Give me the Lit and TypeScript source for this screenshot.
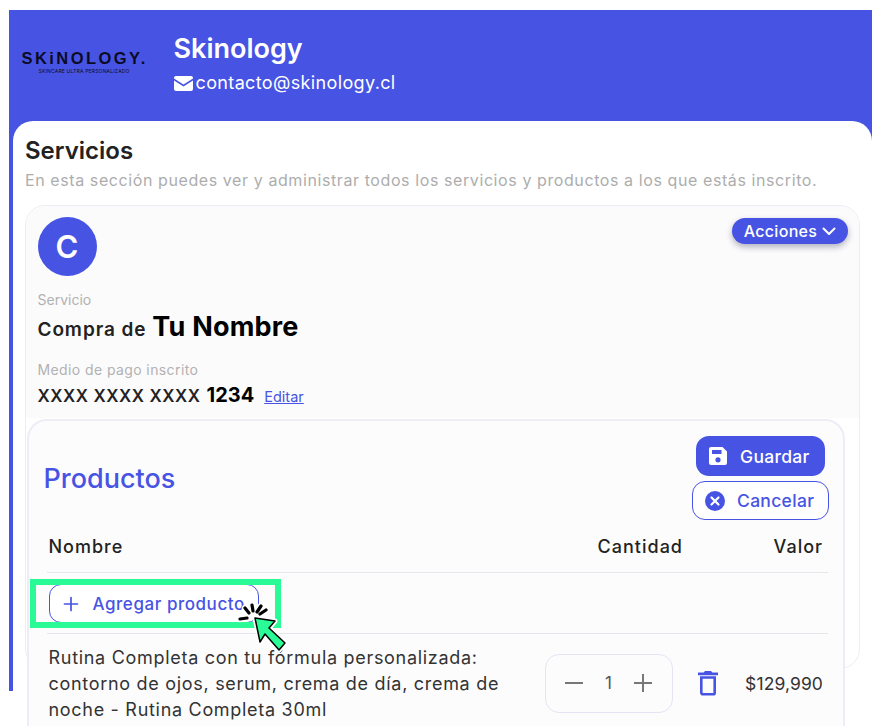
import { LitElement, html, css } from "lit";
import { customElement } from "lit/decorators.js";

@customElement("app-root")
export class AppRoot extends LitElement {
  static styles = css`
    :host { display: block; position: relative; width: 882px; height: 726px; overflow: hidden; background: #fff; font-family: Inter, "Liberation Sans", sans-serif; color: #222; }
    .page { height: 726px; padding: 10px 10px 0 8.5px; box-sizing: border-box; }
    .shell { height: 681px; background: #4754e3; display: flex; flex-direction: column; }
    .head { height: 111px; flex: none; display: flex; align-items: center; box-sizing: border-box; padding-left: 13px; }
    .logo { width: 152px; flex: none; display: flex; flex-direction: column; margin-top: -9px; color: #0b0b26; }
    .logo b { font-size: 16.5px; line-height: 20px; font-weight: 800; letter-spacing: 2.45px; font-family: "Liberation Sans", sans-serif; white-space: nowrap; }
    .logo span { font-size: 5px; line-height: 6px; margin-left: 17px; letter-spacing: .2px; white-space: nowrap; }
    .brand { color: #fff; margin-top: -3px; }
    .brand h1 { margin: 0; font-size: 27px; line-height: 32px; font-weight: 600; letter-spacing: 0; }
    .mail { display: flex; align-items: center; gap: 3px; margin-top: 6px; font-size: 18px; line-height: 24px; letter-spacing: .36px; }
    .main { flex: 1; margin-left: 4.5px; background: #fff; border-radius: 20px 20px 0 0; padding: 17px 12px 0; min-height: 0; }
    h2 { margin: 0; font-size: 24px; line-height: 26px; font-weight: 600; letter-spacing: 0; color: #222; }
    .desc { margin: 5px 0 0; font-size: 16px; line-height: 22px; color: #adadad; white-space: nowrap; letter-spacing: .59px; }
    .card { height: 464px; margin-top: 14px; box-sizing: border-box; border: 1.5px solid #eeedf6; border-radius: 20px; background: #fff; }
    .top { height: 212px; box-sizing: border-box; padding: 11px 11px 0 11.5px; background: #fbfbfc; border-radius: 20px 20px 0 0; }
    .row1 { display: flex; justify-content: space-between; align-items: flex-start; }
    .avatar { width: 59px; height: 59px; border-radius: 50%; background: #4754e3; color: #fff; display: flex; align-items: center; justify-content: center; font-size: 31px; font-weight: 600; }
    .pill { margin-top: 1px; width: 116px; height: 26px; border-radius: 13px; background: #4754e3; color: #fff; display: flex; align-items: center; justify-content: center; gap: 5px; font-size: 16px; letter-spacing: .3px; box-shadow: 0 3px 6px rgba(40,40,80,.35); font-weight: 500; }
    .lab { font-size: 14px; line-height: 18px; color: #b2b2b2; }
    .lab.a { margin-top: 15px; }
    .lab.b { margin-top: 15px; letter-spacing: .4px; }
    .svc { display: flex; align-items: baseline; gap: 6px; margin-top: 2px; font-size: 19px; line-height: 32px; font-weight: 600; color: #222; letter-spacing: .9px; white-space: nowrap; }
    .svc b { font-size: 27px; font-weight: 700; color: #000; letter-spacing: .2px; }
    .pay { display: flex; align-items: baseline; margin-top: 4px; font-size: 17px; line-height: 24px; font-weight: 600; letter-spacing: .55px; color: #222; white-space: nowrap; }
    .pay b { font-size: 20px; color: #000; font-weight: 700; margin-left: 6px; letter-spacing: 0; }
    .pay a { font-size: 14.5px; font-weight: 400; color: #4754e3; text-decoration: underline; margin-left: 10px; letter-spacing: 0; }
    .prod { margin: 1px 14px 0 .5px; height: 400px; box-sizing: border-box; background: #fcfcfd; border: 2px solid #eeedf6; border-radius: 20px; padding: 15px 15px 0 18px; }
    .ph { display: flex; justify-content: space-between; align-items: center; }
    .ph h3 { margin: 0 0 0 -3px; font-size: 27px; font-weight: 500; color: #4754e3; }
    .btns { display: flex; flex-direction: column; align-items: center; gap: 5px; margin-right: -1px; }
    .btn { box-sizing: border-box; display: flex; align-items: center; font-size: 17.5px; font-weight: 500; letter-spacing: .3px; border-radius: 13px; }
    .save { width: 129px; height: 40px; background: #4754e3; color: #fff; padding-left: 13px; gap: 13px; }
    .cancel { width: 137px; height: 39px; background: #fff; color: #4754e3; border: 1px solid #4754e3; padding-left: 12px; gap: 12px; }
    .thead { display: flex; align-items: center; height: 52px; border-bottom: 1px solid #e6e6ec; font-size: 18px; font-weight: 500; color: #222; letter-spacing: 1px; padding-left: 2px; padding-right: 5px; }
    .thead .n { flex: 1; }
    .thead .v { width: 140px; text-align: right; }
    .addrow { height: 61px; border-bottom: 1px solid #e6e6ec; padding: 11px 0 0 2px; box-sizing: border-box; }
    .add { width: 210px; height: 39px; box-sizing: border-box; border: 1px solid #4754e3; border-radius: 12px; background: #fff; color: #4754e3; display: flex; align-items: center; gap: 14px; padding-left: 13px; font-size: 17px; font-weight: 500; letter-spacing: .55px; }
    .item { display: flex; align-items: center; padding: 9px 5px 0 2px; }
    .itxt { width: 496px; flex: none; margin-top: 2px; font-size: 18px; line-height: 26px; color: #333; letter-spacing: .7px; }
    .step { width: 128px; height: 59px; box-sizing: border-box; border: 1px solid #e5e4f3; border-radius: 14px; display: flex; align-items: center; justify-content: space-between; padding: 0 18px; font-size: 17px; color: #555; }
    .trash { margin-left: 25px; display: flex; }
    .price { margin-left: auto; font-size: 17.5px; letter-spacing: .1px; color: #333; }
    .hl { position: absolute; left: 30px; top: 579px; width: 251px; height: 49px; box-sizing: border-box; border: 6px solid #2bfb97; }
    .cur { position: absolute; left: 234px; top: 598px; }
    svg { display: block; flex: none; }
  `;

  render() {
    const spokes = "M19 13 18 7M23 14l4-6M26 16l6-4M15 15l-4-5M13 20l-7 1";
    const arrow = "M21 20 41 23 35 30 51 45 45 52 31 36 26 44z";
    return html`
      <div class="page">
        <div class="shell">
          <header class="head">
            <div class="logo"><b>SKiNOLOGY.</b><span>SKINCARE ULTRA PERSONALIZADO</span></div>
            <div class="brand">
              <h1>Skinology</h1>
              <div class="mail">
                <svg width="19" height="15" viewBox="0 0 19 15"><path fill="#fff" d="M2 0h15a2 2 0 0 1 2 2v.6L9.500 8.600 0 2.600V2a2 2 0 0 1 2-2zM0 4.600l9.500 6 9.500-6V13a2 2 0 0 1-2 2H2a2 2 0 0 1-2-2z"/></svg>
                contacto@skinology.cl
              </div>
            </div>
          </header>
          <main class="main">
            <h2>Servicios</h2>
            <p class="desc">En esta sección puedes ver y administrar todos los servicios y productos a los que estás inscrito.</p>
            <section class="card">
              <div class="top">
                <div class="row1">
                  <div class="avatar">C</div>
                  <div class="pill">Acciones
                    <svg width="14" height="9" viewBox="0 0 14 9"><path d="M1.500 1.500 7 7l5.500-5.500" fill="none" stroke="#fff" stroke-width="2" stroke-linecap="round" stroke-linejoin="round"/></svg>
                  </div>
                </div>
                <div class="lab a">Servicio</div>
                <div class="svc">Compra de <b>Tu Nombre</b></div>
                <div class="lab b">Medio de pago inscrito</div>
                <div class="pay">XXXX XXXX XXXX <b>1234</b><a>Editar</a></div>
              </div>
              <div class="prod">
                <div class="ph">
                  <h3>Productos</h3>
                  <div class="btns">
                    <div class="btn save">
                      <svg width="18" height="18" viewBox="0 0 18 18"><path fill="#fff" fill-rule="evenodd" d="M2 0h11.500L18 4.500V16a2 2 0 0 1-2 2H2a2 2 0 0 1-2-2V2a2 2 0 0 1 2-2zm1 3v4h9.500V3zm6 7.200a2.600 2.600 0 1 0 0 5.200 2.600 2.600 0 0 0 0-5.200z"/></svg>
                      Guardar
                    </div>
                    <div class="btn cancel">
                      <svg width="20" height="20" viewBox="0 0 20 20"><circle cx="10" cy="10" r="10" fill="#4754e3"/><path d="m6.500 6.500 7 7m0-7-7 7" stroke="#fff" stroke-width="2.200" stroke-linecap="round"/></svg>
                      Cancelar
                    </div>
                  </div>
                </div>
                <div class="thead"><span class="n">Nombre</span><span>Cantidad</span><span class="v">Valor</span></div>
                <div class="addrow">
                  <div class="add">
                    <svg width="16" height="16" viewBox="0 0 16 16"><path d="M8 1.500v13M1.500 8h13" stroke="#4754e3" stroke-width="1.700" stroke-linecap="round"/></svg>
                    Agregar producto
                  </div>
                </div>
                <div class="item">
                  <div class="itxt">Rutina Completa con tu fórmula personalizada: contorno de ojos, serum, crema de día, crema de noche - Rutina Completa 30ml</div>
                  <div class="step">
                    <svg width="20" height="20" viewBox="0 0 20 20"><path d="M1 10h18" stroke="#777" stroke-width="2"/></svg>
                    <span>1</span>
                    <svg width="20" height="20" viewBox="0 0 20 20"><path d="M10 1v18M1 10h18" stroke="#777" stroke-width="2"/></svg>
                  </div>
                  <div class="trash">
                    <svg width="20" height="25" viewBox="0 0 20 25"><path fill="none" stroke="#4754e3" stroke-width="2.600" d="M3.300 6.500h13.400v15.200a1.600 1.600 0 0 1-1.600 1.600H4.900a1.600 1.600 0 0 1-1.600-1.600z"/><path fill="#4754e3" d="M7 0h6l1.400 1.600H20v2.600H0V1.600h5.600z"/></svg>
                  </div>
                  <div class="price">$129,990</div>
                </div>
              </div>
            </section>
          </main>
        </div>
      </div>
      <div class="hl"></div>
      <svg class="cur" width="56" height="58" viewBox="0 0 56 58">
        <g stroke-linecap="round" fill="none">
          <path d=${spokes} stroke="#fff" stroke-width="6.500"/>
          <path d=${spokes} stroke="#000" stroke-width="3.200"/>
        </g>
        <path d=${arrow} fill="#2bfb97" stroke="#fff" stroke-width="5" stroke-linejoin="round"/>
        <path d=${arrow} fill="#2bfb97" stroke="#000" stroke-width="1.500" stroke-linejoin="round"/>
      </svg>
    `;
  }
}
